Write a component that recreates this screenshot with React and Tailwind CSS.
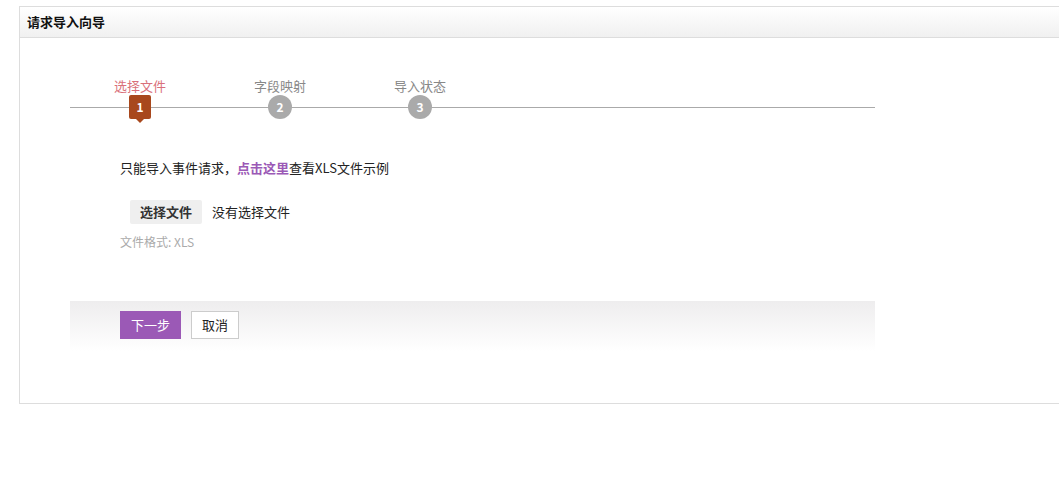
import React from 'react';

const steps = [
    { label: '选择文件', active: true },
    { label: '字段映射' },
    { label: '导入状态' },
];

function StepMark({ index, active }) {
    if (active) {
        return (
            <div className="relative w-[22px] h-[24px] rounded-[2px] bg-[#a8481d] text-white text-[12px] font-bold flex items-center justify-center">
                {index}
                {/* 下方小三角 */}
                <div className="absolute left-1/2 -translate-x-1/2 top-[24px] w-0 h-0 border-l-[4px] border-r-[4px] border-t-[4px] border-l-transparent border-r-transparent border-t-[#a8481d]" />
            </div>
        );
    }
    return (
        <div className="w-[24px] h-[24px] rounded-full bg-[#aaaaaa] text-white text-[12px] font-bold flex items-center justify-center">
            {index}
        </div>
    );
}

export default function App() {
    return (
        <div className="w-[1059px] h-[502px] bg-white overflow-hidden text-[13px] text-[#222] font-['Noto_Sans_CJK_SC','Noto_Sans',sans-serif]">
            <div className="ml-[19px] mt-[6px] w-[1060px] h-[398px] border border-[#dddddd]">
                {/* 标题栏 */}
                <div className="h-[31px] px-[7px] flex items-center border-b border-[#dddddd] bg-gradient-to-b from-white to-[#f0f0f0] font-bold text-[13px] text-[#111]">
                    请求导入向导
                </div>

                <div className="ml-[50px] w-[805px]">
                    {/* 步骤条 */}
                    <div className="relative mt-[39px] h-[86px]">
                        <div className="absolute left-0 right-0 top-[30px] h-px bg-[#aaaaaa]" />
                        <div className="relative flex">
                            {steps.map((s, i) => (
                                <div key={s.label} className="w-[140px] flex flex-col items-center">
                                    <div className={`h-[18px] leading-[18px] text-[13px] ${s.active ? 'text-[#d9707a]' : 'text-[#888888]'}`}>
                                        {s.label}
                                    </div>
                                    <div className="h-[26px] flex items-start">
                                        <StepMark index={i + 1} active={s.active} />
                                    </div>
                                </div>
                            ))}
                        </div>
                    </div>

                    {/* 表单 */}
                    <div className="pl-[50px]">
                        <div className="mt-[-5px] h-[20px] leading-[20px] text-[#222]">
                            只能导入事件请求，<span className="font-bold text-[#9b59b6]">点击这里</span>查看XLS文件示例
                        </div>
                        <div className="mt-[22px] ml-[10px] flex items-center">
                            <div className="w-[72px] h-[24px] rounded-[2px] bg-[#efefef] font-bold text-[#333] flex items-center justify-center">
                                选择文件
                            </div>
                            <span className="ml-[10px] text-[#222]">没有选择文件</span>
                        </div>
                        <div className="mt-[8px] h-[20px] leading-[20px] text-[12px] text-[#aaaaaa]">文件格式: XLS</div>
                    </div>

                    {/* 操作栏 */}
                    <div className="mt-[49px] h-[50px] pl-[50px] pt-[10px] flex items-start gap-[10px] bg-gradient-to-b from-[#eeedee] to-white">
                        <button className="w-[61px] h-[28px] bg-[#9b59b6] text-white text-[13px]">下一步</button>
                        <button className="w-[48px] h-[28px] bg-white border border-[#cccccc] text-[#222] text-[13px]">取消</button>
                    </div>
                </div>
            </div>
        </div>
    );
}
